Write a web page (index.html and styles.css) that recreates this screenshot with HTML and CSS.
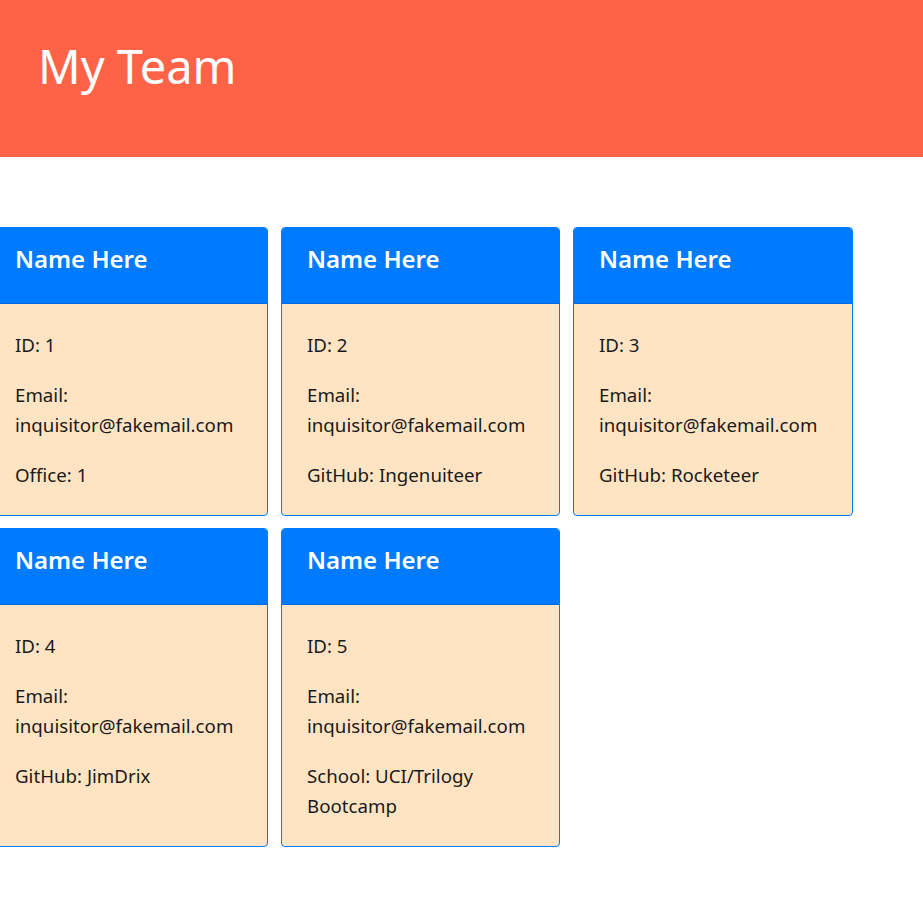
FILE: index.html
```html
<!DOCTYPE html>
<html lang="en">
<head>
<meta charset="utf-8">
<title>My Team</title>
<link rel="stylesheet" href="styles.css">
</head>
<body>
<header class="hero">
  <h1 class="hero-title">My Team</h1>
</header>
<main class="team">
  <div class="card">
    <div class="card-header"><h2 class="card-name">Name Here</h2></div>
    <div class="card-body">
      <p>ID: 1</p>
      <p>Email: inquisitor@fakemail.com</p>
      <p>Office: 1</p>
    </div>
  </div>
  <div class="card">
    <div class="card-header"><h2 class="card-name">Name Here</h2></div>
    <div class="card-body">
      <p>ID: 2</p>
      <p>Email: inquisitor@fakemail.com</p>
      <p>GitHub: Ingenuiteer</p>
    </div>
  </div>
  <div class="card">
    <div class="card-header"><h2 class="card-name">Name Here</h2></div>
    <div class="card-body">
      <p>ID: 3</p>
      <p>Email: inquisitor@fakemail.com</p>
      <p>GitHub: Rocketeer</p>
    </div>
  </div>
  <div class="card">
    <div class="card-header"><h2 class="card-name">Name Here</h2></div>
    <div class="card-body">
      <p>ID: 4</p>
      <p>Email: inquisitor@fakemail.com</p>
      <p>GitHub: JimDrix</p>
    </div>
  </div>
  <div class="card">
    <div class="card-header"><h2 class="card-name">Name Here</h2></div>
    <div class="card-body">
      <p>ID: 5</p>
      <p>Email: inquisitor@fakemail.com</p>
      <p>School: UCI/Trilogy Bootcamp</p>
    </div>
  </div>
</main>
</body>
</html>
```

FILE: styles.css
```css
* { box-sizing: border-box; }
html, body { margin: 0; padding: 0; }
body {
  font-family: "Noto Sans", "Open Sans", sans-serif;
  color: #212529;
  background: #fff;
}
.hero {
  background: #ff6347;
  height: 157px;
  padding: 38px 38px 0;
}
.hero-title {
  margin: 0;
  color: #fff;
  font-size: 47px;
  font-weight: 400;
  line-height: 1.2;
}
.team {
  display: grid;
  grid-template-columns: 279px 279px 280px;
  column-gap: 13px;
  row-gap: 12px;
  margin: 70px 0 0 -11px;
}
.card {
  border: 1px solid #007bff;
  border-radius: 4px;
  overflow: hidden;
  background: #ffe4c4;
  display: flex;
  flex-direction: column;
}
.card-header {
  background: #007bff;
  height: 76px;
  padding: 16px 25px 0;
  border-bottom: 1px solid rgba(0,0,0,.125);
}
.card-name {
  margin: 0;
  color: #fff;
  font-size: 24px;
  font-weight: 600;
  line-height: 29px;
}
.card-body {
  padding: 26px 25px 5px 25px;
  font-size: 18.7px;
  line-height: 30px;
  color: #1a1a1a;
}
.card-body p {
  margin: 0 0 20px;
}
```
